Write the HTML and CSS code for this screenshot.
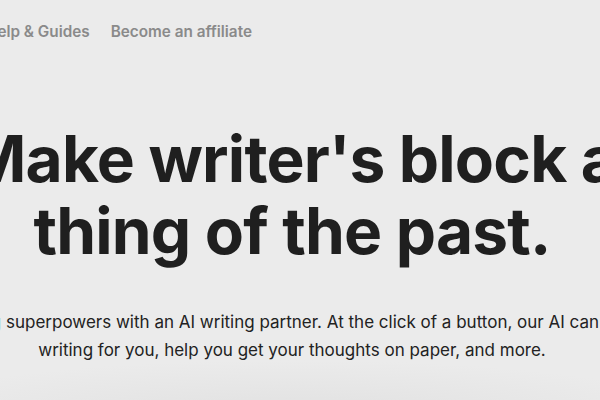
FILE: index.html
```html
<!DOCTYPE html>
<html lang="en">
  <head>
    <meta charset="utf-8" />
    <title>AI writing partner</title>
    <link rel="stylesheet" href="styles.css">
  </head>
  <body>
    <div class="page">
      <div class="nav">
        <a href="#">Help &amp; Guides</a>
        <a href="#">Become an affiliate</a>
      </div>

      <div class="hero">
        <h1 class="title">Make writer's block a<br>thing of the past.</h1>
        <p class="lead">Get <span class="accent">writing</span> superpowers with an AI writing partner. At the click of a button, our AI can start the<br>writing for you, help you get your thoughts on paper, and more.</p>
      </div>
    </div>
  </body>
</html>
```

FILE: styles.css
```css
html, body {
  margin: 0;
  padding: 0;
}

body {
  width: 600px;
  height: 400px;
  overflow: hidden;
  background: #ebebeb;
  font-family: Inter, "Liberation Sans", sans-serif;
  color: #222;
}

.page {
  width: 1000px;
  margin-left: -208px;
  height: 400px;
  background: radial-gradient(ellipse 420px 60px at 500px 420px, #e0e0e0, #ebebeb00) #ebebeb;
}

.nav {
  display: flex;
  gap: 21px;
  padding: 22px 0 0 194px;
  line-height: 20px;
}

.nav a {
  color: #8a8a8a;
  font-size: 15.3px;
  font-weight: 600;
  text-decoration: none;
}

.hero {
  text-align: center;
  padding-top: 81px;
}

.title {
  margin: 0;
  font-size: 64px;
  line-height: 72px;
  font-weight: 700;
  letter-spacing: -0.8px;
  color: #1f1f1f;
  white-space: nowrap;
}

.lead {
  margin: 41px 0 0;
  font-size: 17px;
  line-height: 28px;
  color: #222;
  white-space: nowrap;
}

.accent {
  color: #3b8fe0;
}
```
